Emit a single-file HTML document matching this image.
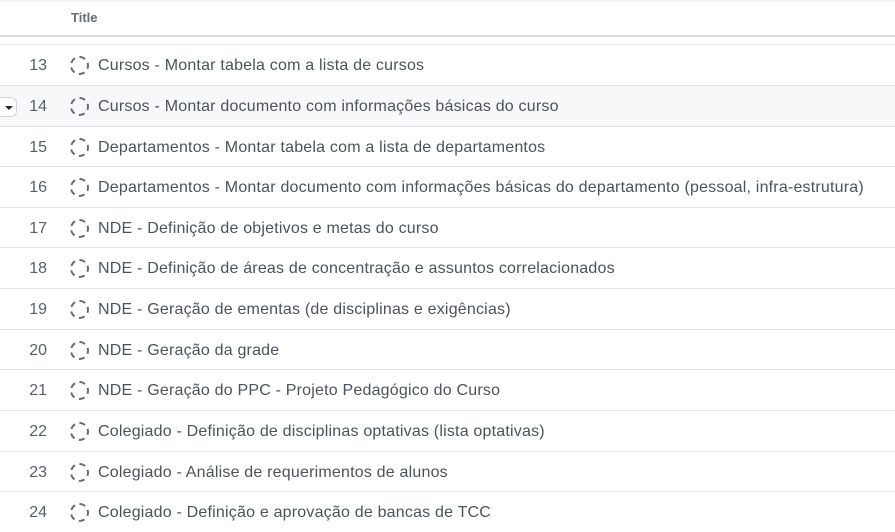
<!DOCTYPE html>
<html><head><meta charset="utf-8"><style>
body{margin:0;width:895px;height:521px;overflow:hidden;background:#fff;font-family:"Liberation Sans","DejaVu Sans",sans-serif;color:#444d56;position:relative}
.hdr{position:absolute;left:0;top:0;width:895px;height:35px;border-bottom:2px solid #d8dee4}
.hdr span{position:absolute;left:71px;top:10px;font-size:13px;font-weight:bold;color:#656d76}
.top{position:absolute;left:0;top:0;width:895px;height:2px;background:#f3f4f6}
.row{position:absolute;left:0;width:895px;height:40px;border-top:1px solid #e1e4e8}
.row.h{background:#f6f8fa}
.num{position:absolute;right:848px;top:12px;font-size:16px;color:#57606a}
.ic{position:absolute;left:70px;top:11px;width:19px;height:19px;border:2px dashed #656d76;border-radius:50%;box-sizing:border-box}
.t{position:absolute;left:98px;top:12px;font-size:16px;letter-spacing:0.2px;white-space:nowrap;color:#4b535d}
.btn{position:absolute;left:-4px;top:11px;width:21px;height:20px;border:1px solid #d0d7de;border-radius:6px;background:#fff;box-sizing:border-box}
.btn:after{content:"";position:absolute;left:8px;top:8px;border-left:4px solid transparent;border-right:4px solid transparent;border-top:4px solid #24292f}
</style></head><body>
<div class="top"></div>
<div class="hdr"><span>Title</span></div>
<div class="row" style="top:44px"><span class="num">13</span><span class="ic"></span><span class="t">Cursos - Montar tabela com a lista de cursos</span></div>
<div class="row h" style="top:85px"><span class="btn"></span><span class="num">14</span><span class="ic"></span><span class="t">Cursos - Montar documento com informações básicas do curso</span></div>
<div class="row" style="top:126px"><span class="num">15</span><span class="ic"></span><span class="t">Departamentos - Montar tabela com a lista de departamentos</span></div>
<div class="row" style="top:166px"><span class="num">16</span><span class="ic"></span><span class="t">Departamentos - Montar documento com informações básicas do departamento (pessoal, infra-estrutura)</span></div>
<div class="row" style="top:207px"><span class="num">17</span><span class="ic"></span><span class="t">NDE - Definição de objetivos e metas do curso</span></div>
<div class="row" style="top:247px"><span class="num">18</span><span class="ic"></span><span class="t">NDE - Definição de áreas de concentração e assuntos correlacionados</span></div>
<div class="row" style="top:288px"><span class="num">19</span><span class="ic"></span><span class="t">NDE - Geração de ementas (de disciplinas e exigências)</span></div>
<div class="row" style="top:329px"><span class="num">20</span><span class="ic"></span><span class="t">NDE - Geração da grade</span></div>
<div class="row" style="top:369px"><span class="num">21</span><span class="ic"></span><span class="t">NDE - Geração do PPC - Projeto Pedagógico do Curso</span></div>
<div class="row" style="top:410px"><span class="num">22</span><span class="ic"></span><span class="t">Colegiado - Definição de disciplinas optativas (lista optativas)</span></div>
<div class="row" style="top:451px"><span class="num">23</span><span class="ic"></span><span class="t">Colegiado - Análise de requerimentos de alunos</span></div>
<div class="row" style="top:491px"><span class="num">24</span><span class="ic"></span><span class="t">Colegiado - Definição e aprovação de bancas de TCC</span></div>
</body></html>
